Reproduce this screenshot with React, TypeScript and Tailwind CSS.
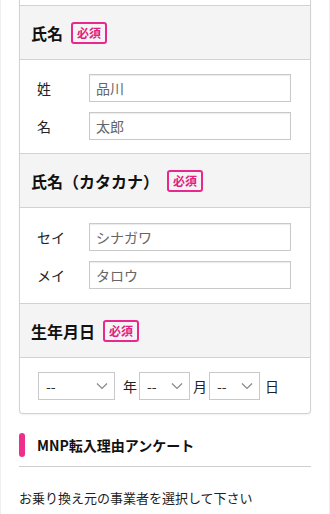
const font = { fontFamily: '"Noto Sans CJK JP", "Noto Sans", sans-serif' };

function Badge() {
  return (
    <span className="inline-flex h-[22px] items-center rounded-[3px] border-2 border-[#e8288c] px-[4px] text-[12px] font-bold leading-[18px] text-[#e0207f]">
      必須
    </span>
  );
}

function SectionHead({ title }: { title: string }) {
  return (
    <div className="flex h-[55px] items-center gap-2 border-y border-[#d2d2d2] bg-[#f4f4f4] pl-[11px]">
      <h3 className="text-[16px] font-bold text-[#111]">{title}</h3>
      <Badge />
    </div>
  );
}

function TextRow({ label, value }: { label: string; value: string }) {
  return (
    <div className="flex items-center">
      <span className="w-[52px] text-[14px] text-[#222]">{label}</span>
      <div className="flex h-[28px] flex-1 items-center border border-[#c9c9c9] bg-white pl-[6px] text-[14px] text-[#666] shadow-[inset_0_1px_1px_rgba(0,0,0,0.08)]">
        {value}
      </div>
    </div>
  );
}

function Select({ width }: { width: string }) {
  return (
    <div className={`${width} flex h-[28px] items-center justify-between border border-[#c9c9c9] bg-white pl-[7px] pr-[6px] text-[14px] text-[#333]`}>
      <span>--</span>
      <svg width="12" height="8" viewBox="0 0 12 8" fill="none">
        <path d="M1 1.5l5 5 5-5" stroke="#888" strokeWidth="1.2" />
      </svg>
    </div>
  );
}

export default function App() {
  return (
    <div style={font} className="min-h-[514px] border-x border-[#eeeeee] bg-white px-[18px]">
      <div className="rounded-b-[4px] border-x border-b border-[#d2d2d2] shadow-[0_1px_2px_rgba(0,0,0,0.06)]">
        <div className="h-[5px]" />

        <SectionHead title="氏名" />
        <div className="flex flex-col gap-[10px] pl-[17px] pr-[19px] pt-[14px] pb-[13px]">
          <TextRow label="姓" value="品川" />
          <TextRow label="名" value="太郎" />
        </div>

        <SectionHead title="氏名（カタカナ）" />
        <div className="flex flex-col gap-[10px] pl-[17px] pr-[19px] pt-[15px] pb-[14px]">
          <TextRow label="セイ" value="シナガワ" />
          <TextRow label="メイ" value="タロウ" />
        </div>

        <SectionHead title="生年月日" />
        <div className="flex items-center pl-[18px] pt-[14px] pb-[13px] text-[14px] text-[#222]">
          <Select width="w-[77px]" />
          <span className="ml-[8px] mr-[2px]">年</span>
          <Select width="w-[51px]" />
          <span className="ml-[3px] mr-[2px]">月</span>
          <Select width="w-[51px]" />
          <span className="ml-[5px]">日</span>
        </div>
      </div>

      <div className="mt-[19px] flex h-[24px] items-center">
        <span className="h-[24px] w-[6px] rounded-full bg-[#ee2e8c]" />
        <h2 className="ml-[12px] text-[14px] font-bold text-[#111]">MNP転入理由アンケート</h2>
      </div>
      <div className="mt-[9px] border-t border-[#cfcfcf]" />

      <p className="mt-[21px] text-[13px] text-[#222]">お乗り換え元の事業者を選択して下さい</p>
    </div>
  );
}
